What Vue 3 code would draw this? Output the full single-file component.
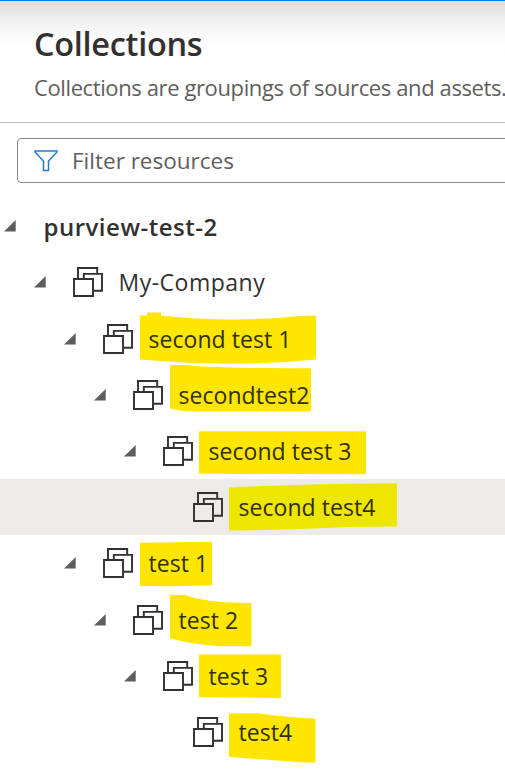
<script setup>
const rows = [
  { label: 'purview-test-2', level: 0, root: true, open: true },
  { label: 'My-Company', level: 1, open: true },
  { label: 'second test 1', level: 2, open: true, tint: '#ffe600', mark: 'M140 4.500H147V1.500H161V4.500Q230 12 300 5L316 4.500V48.500Q235 57 140 48.500Z' },
  { label: 'secondtest2', level: 3, open: true, tint: '#ffe600', mark: 'M170-2H187Q205 1 311 1.300V44.500H192Q180 44 170 41.500Z' },
  { label: 'second test 3', level: 4, open: true, tint: '#ffe600', mark: 'M199 8.300H366V51.300L199 50.800Z' },
  { label: 'second test4', level: 5, selected: true, tint: '#ede600', mark: 'M229 8.500Q300 5 397 4.300V47.500L348 48Q290 51 229 51.500Z' },
  { label: 'test 1', level: 2, open: true, tint: '#ffe600', mark: 'M140 7.700L212 6.700V50.200Q180 51.500 140 51Z' },
  { label: 'test 2', level: 3, open: true, tint: '#ffe600', mark: 'M170 3H185Q205 10.900 251.500 10.900V54.200H220Q190 52.200 170 46.200Z' },
  { label: 'test 3', level: 4, open: true, tint: '#ffe600', mark: 'M199 6.500H281V50L199 49.300Z' },
  { label: 'test4', level: 5, tint: '#ffe600', mark: 'M229 9.200H258Q285 12.700 315.500 14.700V58.500H303L229 52.900Z' }
]
</script>

<template>
  <main class="panel">
    <header class="head">
      <h1>Collections</h1>
      <p>Collections are groupings of sources and assets.</p>
    </header>
    <div class="filter">
      <svg width="24" height="22" viewBox="0 0 24 22">
        <path d="M1 1H23V2L14.500 11V20.500H9.500V11L1 2Z" fill="none" stroke="#1f78dc" stroke-width="1.500" />
      </svg>
      <span>Filter resources</span>
    </div>
    <div class="tree">
      <div v-for="row in rows" :key="row.label" class="row" :class="{ selected: row.selected, root: row.root }">
        <svg v-if="row.mark" class="mark" width="505" height="56"><path :d="row.mark" :fill="row.tint" /></svg>
        <div class="item" :style="{ paddingLeft: row.level * 30 + 'px' }">
          <svg class="caret" width="12" height="12" viewBox="0 0 12 12"><path v-if="row.open" d="M0 11.500L11.700 0V11.500Z" fill="#605e5c" /></svg>
          <svg v-if="!row.root" class="icon" width="30" height="30" viewBox="0 0 30 30" fill="none" stroke="#323130" stroke-width="1.900">
            <path d="M5 11V1H24.200V6M10.800 11V6.900H29V23.700H21M1 12H20V29H1Z" />
          </svg>
          <span class="label" :class="{ marked: row.mark }">{{ row.label }}</span>
        </div>
      </div>
    </div>
  </main>
</template>

<style>
body { background: #fff; overflow: hidden; }
</style>

<style scoped>
.panel { width: 505px; height: 781px; box-sizing: border-box; overflow: hidden; border-top: 1px solid #0078d4; font-family: "Open Sans", "Noto Sans", sans-serif; font-weight: 370; color: #323130; background: linear-gradient(#dcdcdc, #f0f0f0 20px, #fcfcfc 38px, #fff 50px); }
.head { height: 122px; box-sizing: border-box; padding: 21px 0 0 34px; border-bottom: 1px solid #c4c2c0; white-space: nowrap; }
h1 { margin: 0; font-size: 32.500px; line-height: 44px; font-weight: 580; letter-spacing: -.3px; }
p { margin: 7px 0 0; font-size: 22px; line-height: 28px; color: #605e5c; letter-spacing: -.39px; }
.filter { display: flex; align-items: center; gap: 14px; box-sizing: border-box; width: 510px; height: 45px; margin: 15px 0 0 17px; padding-left: 16px; border: 1px solid #8a8886; border-radius: 4px; background: #fff; font-size: 22.500px; color: #605e5c; letter-spacing: 0; }
.tree { padding-top: 15.200px; }
.row { position: relative; height: 56.200px; }
.selected { background: #edebe9; }
.mark { position: absolute; left: 0; top: 0; overflow: visible; }
.item { position: relative; display: flex; align-items: center; height: 56px; margin-left: 4px; white-space: nowrap; font-size: 23px; letter-spacing: .5px; }
.caret { flex: none; }
.icon { flex: none; margin: 0 15.500px 0 27px; }
.root .label { margin-left: 27.500px; font-size: 24px; font-weight: 600; letter-spacing: .5px; }
.marked { color: #323000; letter-spacing: .05px; }
</style>
